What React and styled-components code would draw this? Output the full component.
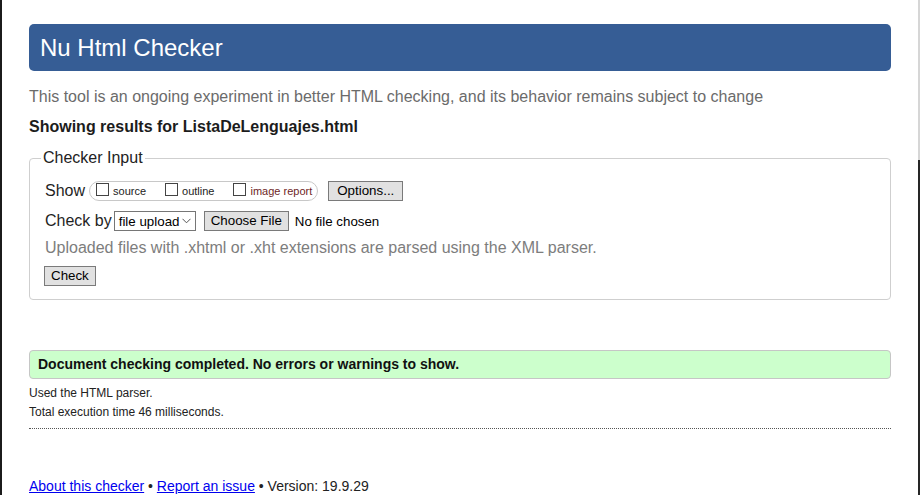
import React from "react";
import styled, { createGlobalStyle } from "styled-components";

const GlobalStyle = createGlobalStyle`
  html, body {
    margin: 0;
    padding: 0;
    background: #fff;
  }
  body {
    font-family: "Liberation Sans", Arial, sans-serif;
    color: #222;
  }
`;

// the window frame: dark line on the left, light/dark edge on the right
const Frame = styled.div`
  min-height: 495px;
  box-sizing: border-box;
  padding: 24px 29px 0 29px;
  background:
    linear-gradient(#1b1b1b, #1b1b1b) left top / 2px 100% no-repeat,
    linear-gradient(to bottom, #d6d6d6 0 160px, #262626 160px) right top / 2px 100% no-repeat,
    #fff;
`;

const Header = styled.h1`
  margin: 0;
  height: 47px;
  padding: 0 11px;
  border-radius: 5px;
  background: #365d95;
  color: #fff;
  font-size: 24px;
  font-weight: normal;
  line-height: 47px;
`;

const Intro = styled.p`
  margin: 16px 0 0;
  font-size: 16px;
  line-height: 20px;
  color: #6b6b6b;
`;

const ResultsFor = styled.h2`
  margin: 10px 0 0;
  font-size: 16px;
  line-height: 20px;
  font-weight: bold;
  color: #1c1c1c;
`;

const Fieldset = styled.fieldset`
  margin: 12px 0 0;
  padding: 14px 15px 13px 15px;
  border: 1px solid #cfcfcf;
  border-radius: 4px;
  min-width: 0;
`;

const Legend = styled.legend`
  margin-left: -4px;
  padding: 0 2px;
  font-size: 16px;
  line-height: 18px;
  color: #222;
`;

const Row = styled.div`
  display: flex;
  align-items: center;
  height: 20px;
  margin-top: ${(p) => p.$gap || 0}px;
  font-size: 16px;
`;

const Label = styled.span`
  font-size: 16px;
  color: #1f1f1f;
  margin-right: ${(p) => p.$space || 0}px;
`;

const CheckGroup = styled.div`
  display: inline-flex;
  align-items: center;
  gap: 19px;
  height: 18px;
  padding: 0 5px 0 6px;
  border: 1px solid #c8c8c8;
  border-radius: 10px;
`;

const Opt = styled.label`
  display: inline-flex;
  align-items: center;
  font-size: 11px;
  color: ${(p) => p.$color || "#222"};
`;

const Box = styled.input`
  appearance: none;
  width: 13px;
  height: 13px;
  margin: -3px 4px 0 0;
  border: 1px solid #444;
  background: #fff;
  box-sizing: border-box;
`;

const Button = styled.button`
  height: 20px;
  box-sizing: border-box;
  margin: 0 0 0 ${(p) => p.$left || 0}px;
  padding: 0 ${(p) => p.$pad || 6}px;
  border: 1px solid #7a7a7a;
  border-radius: 0;
  background: #e1e1e1;
  color: #000;
  font-family: "Liberation Sans", Arial, sans-serif;
  font-size: 13.33px;
  line-height: 18px;
  cursor: pointer;
`;

const SelectBox = styled.div`
  display: inline-flex;
  align-items: center;
  justify-content: space-between;
  box-sizing: border-box;
  width: 82px;
  height: 20px;
  padding: 0 4px 0 4px;
  border: 1px solid #767676;
  background: #fff;
  font-size: 13.33px;
  color: #000;
`;

const FileName = styled.span`
  margin-left: 6px;
  font-size: 13.33px;
  color: #000;
`;

const Note = styled.p`
  margin: 7px 0 0;
  font-size: 16px;
  line-height: 20px;
  color: #7d7d7d;
`;

const Success = styled.div`
  margin-top: 50px;
  height: 29px;
  box-sizing: border-box;
  padding: 0 8px;
  border: 1px solid #c6c6c6;
  border-radius: 4px;
  background: #ccffcc;
  font-size: 14px;
  font-weight: bold;
  line-height: 27px;
  color: #111;
`;

const Details = styled.div`
  margin-top: 5px;
  padding-bottom: 6px;
  border-bottom: 1px dotted #555;
`;

const Detail = styled.p`
  margin: 0;
  font-size: 12px;
  line-height: 19px;
  color: #222;
`;

const Footer = styled.p`
  margin: 49px 0 0;
  font-size: 14px;
  line-height: 16px;
  color: #222;
`;

const Link = styled.a`
  color: #0000ee;
  text-decoration: underline;
`;

function Chevron() {
  return (
    <svg width="9" height="6" viewBox="0 0 9 6" fill="none">
      <path d="M0.5 0.8 L4.5 4.8 L8.5 0.8" stroke="#555" strokeWidth="1" />
    </svg>
  );
}

export default function App() {
  return (
    <>
      <GlobalStyle />
      <Frame>
        <Header>Nu Html Checker</Header>
        <Intro>
          This tool is an ongoing experiment in better HTML checking, and its
          behavior remains subject to change
        </Intro>
        <ResultsFor>Showing results for ListaDeLenguajes.html</ResultsFor>

        <Fieldset>
          <Legend>Checker Input</Legend>

          <Row>
            <Label $space={4}>Show</Label>
            <CheckGroup>
              <Opt>
                <Box type="checkbox" />
                source
              </Opt>
              <Opt>
                <Box type="checkbox" />
                outline
              </Opt>
              <Opt $color="#6e1f1f">
                <Box type="checkbox" />
                image report
              </Opt>
            </CheckGroup>
            <Button $left={10} $pad={8}>Options...</Button>
          </Row>

          <Row $gap={10}>
            <Label $space={2}>Check by</Label>
            <SelectBox role="combobox">
              <span>file upload</span>
              <Chevron />
            </SelectBox>
            <Button $left={8} $pad={6}>Choose File</Button>
            <FileName>No file chosen</FileName>
          </Row>

          <Note>
            Uploaded files with .xhtml or .xht extensions are parsed using the
            XML parser.
          </Note>

          <Row $gap={8}>
            <Button $left={-1} $pad={6}>Check</Button>
          </Row>
        </Fieldset>

        <Success>Document checking completed. No errors or warnings to show.</Success>

        <Details>
          <Detail>Used the HTML parser.</Detail>
          <Detail>Total execution time 46 milliseconds.</Detail>
        </Details>

        <Footer>
          <Link href="#">About this checker</Link> •{" "}
          <Link href="#">Report an issue</Link> • Version: 19.9.29
        </Footer>
      </Frame>
    </>
  );
}
